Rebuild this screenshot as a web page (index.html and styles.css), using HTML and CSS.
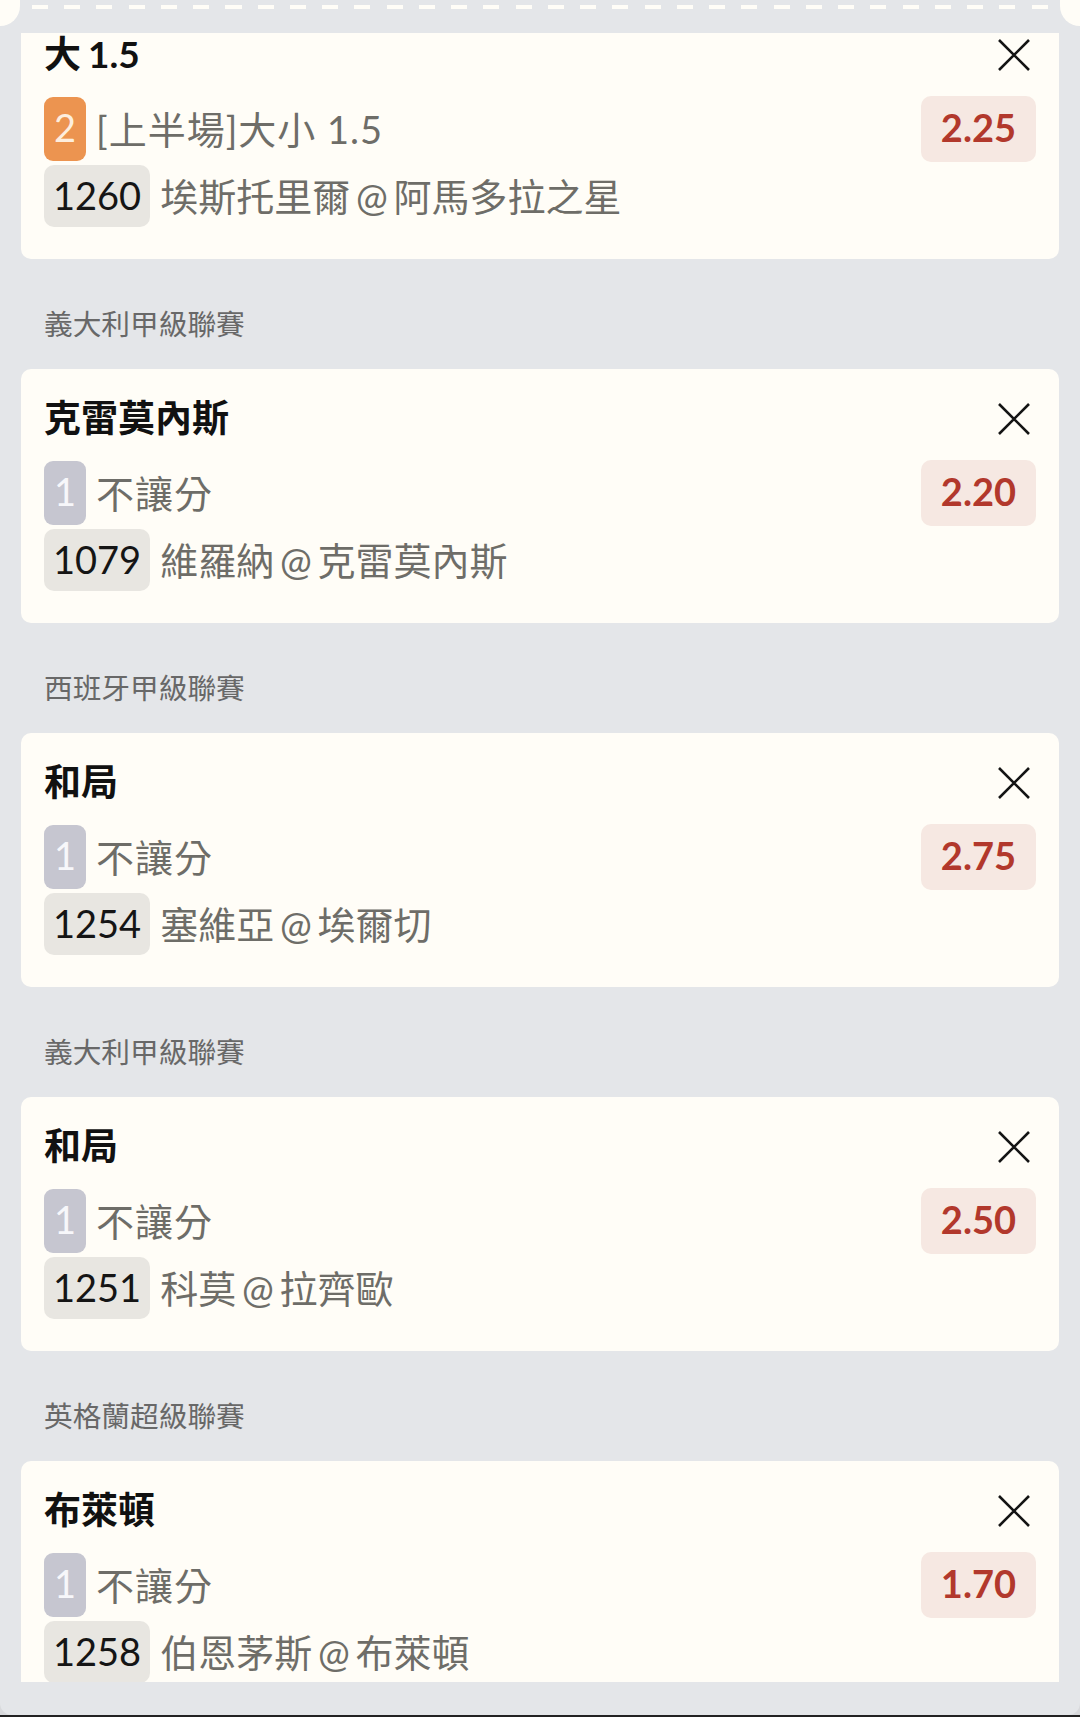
FILE: index.html
```html
<!DOCTYPE html>
<html lang="zh-Hant">
<head>
  <meta charset="UTF-8" />
  <meta name="viewport" content="width=device-width, initial-scale=1.0"/>
  <title>投注單</title>
  <link rel="stylesheet" href="styles.css">
</head>
<body>
  <div class="panel">
    <div class="tear">
      <div class="notch notch-left"></div>
      <div class="perf"></div>
      <div class="notch notch-right"></div>
    </div>

    <div class="slip">
      <div class="slip-list">

        <div class="card">
          <div class="card-head">
            <div class="pick">大 1.5</div>
            <button class="close"><svg viewBox="0 0 32 32"><path d="M1 1L31 31M31 1L1 31"/></svg></button>
          </div>
          <div class="market">
            <div class="market-left">
              <span class="leg leg-2">2</span>
              <span class="market-name">[上半場]大小 1.5</span>
            </div>
            <span class="odds">2.25</span>
          </div>
          <div class="match">
            <span class="code">1260</span>
            <span class="teams">埃斯托里爾 @ 阿馬多拉之星</span>
          </div>
        </div>

        <div class="league">義大利甲級聯賽</div>
        <div class="card">
          <div class="card-head">
            <div class="pick">克雷莫內斯</div>
            <button class="close"><svg viewBox="0 0 32 32"><path d="M1 1L31 31M31 1L1 31"/></svg></button>
          </div>
          <div class="market">
            <div class="market-left">
              <span class="leg leg-1">1</span>
              <span class="market-name">不讓分</span>
            </div>
            <span class="odds">2.20</span>
          </div>
          <div class="match">
            <span class="code">1079</span>
            <span class="teams">維羅納 @ 克雷莫內斯</span>
          </div>
        </div>

        <div class="league">西班牙甲級聯賽</div>
        <div class="card">
          <div class="card-head">
            <div class="pick">和局</div>
            <button class="close"><svg viewBox="0 0 32 32"><path d="M1 1L31 31M31 1L1 31"/></svg></button>
          </div>
          <div class="market">
            <div class="market-left">
              <span class="leg leg-1">1</span>
              <span class="market-name">不讓分</span>
            </div>
            <span class="odds">2.75</span>
          </div>
          <div class="match">
            <span class="code">1254</span>
            <span class="teams">塞維亞 @ 埃爾切</span>
          </div>
        </div>

        <div class="league">義大利甲級聯賽</div>
        <div class="card">
          <div class="card-head">
            <div class="pick">和局</div>
            <button class="close"><svg viewBox="0 0 32 32"><path d="M1 1L31 31M31 1L1 31"/></svg></button>
          </div>
          <div class="market">
            <div class="market-left">
              <span class="leg leg-1">1</span>
              <span class="market-name">不讓分</span>
            </div>
            <span class="odds">2.50</span>
          </div>
          <div class="match">
            <span class="code">1251</span>
            <span class="teams">科莫 @ 拉齊歐</span>
          </div>
        </div>

        <div class="league">英格蘭超級聯賽</div>
        <div class="card">
          <div class="card-head">
            <div class="pick">布萊頓</div>
            <button class="close"><svg viewBox="0 0 32 32"><path d="M1 1L31 31M31 1L1 31"/></svg></button>
          </div>
          <div class="market">
            <div class="market-left">
              <span class="leg leg-1">1</span>
              <span class="market-name">不讓分</span>
            </div>
            <span class="odds">1.70</span>
          </div>
          <div class="match">
            <span class="code">1258</span>
            <span class="teams">伯恩茅斯 @ 布萊頓</span>
          </div>
        </div>

      </div>
    </div>

    <div class="slip-foot"></div>
  </div>
  <div class="home-bar"></div>
</body>
</html>
```

FILE: styles.css
```css
* {
  box-sizing: border-box;
}

body {
  margin: 0;
  background-color: #d8d9dc;
  font-family: 'Lato', 'Noto Sans CJK TC', sans-serif;
}

.panel {
  height: 1715px;
  background-color: #e4e6e9;
  border-radius: 0 0 12px 12px;
  overflow: hidden;
  display: flex;
  flex-direction: column;
}

/* perforated edge at the top */
.tear {
  height: 33px;
  flex-shrink: 0;
  display: flex;
  align-items: flex-start;
}

.notch {
  width: 20px;
  height: 26px;
  background-color: #fffdf7;
}

.notch-left {
  border-bottom-right-radius: 20px;
}

.notch-right {
  border-bottom-left-radius: 20px;
}

.perf {
  flex: 1;
  height: 4px;
  margin: 5px 12px 0;
  background: repeating-linear-gradient(to right, #fffdf7 0 16px, transparent 16px 32.25px);
}

/* list is scrolled a little, first card slides under the top edge */
.slip {
  flex: 1;
  overflow: hidden;
  padding: 0 21px;
}

.slip-list {
  margin-top: -28px;
}

.card {
  background-color: #fffdf7;
  border-radius: 10px;
  padding: 22px 23px 32px;
}

.card-head {
  height: 56px;
  margin-bottom: 14px;
  display: flex;
  align-items: center;
  justify-content: space-between;
}

.pick {
  font-size: 37px;
  font-weight: bold;
  color: #111;
  word-spacing: -2px;
  padding-bottom: 6px;
}

.close {
  border: none;
  background: none;
  padding: 0;
  margin-right: 6px;
  width: 32px;
  height: 32px;
  cursor: pointer;
}

.close svg {
  display: block;
  width: 32px;
  height: 32px;
  fill: none;
  stroke: #141414;
  stroke-width: 2.6;
}

.market {
  height: 64px;
  display: flex;
  align-items: center;
  justify-content: space-between;
}

.market-left {
  display: flex;
  align-items: center;
  gap: 10px;
}

.leg {
  width: 42px;
  height: 64px;
  padding-bottom: 4px;
  border-radius: 9px;
  font-size: 38px;
  display: flex;
  align-items: center;
  justify-content: center;
}

.leg-1 {
  background-color: #c6c6d0;
  color: #f7f7fa;
}

.leg-2 {
  background-color: #ec9450;
  color: #fdeede;
}

.market-name,
.teams {
  font-size: 38px;
  color: #6e6d68;
  padding-bottom: 4px;
}

.market-name {
  letter-spacing: 1px;
}

.teams {
  word-spacing: -4px;
}

.odds {
  height: 66px;
  padding: 0 20px 4px;
  border-radius: 10px;
  background-color: #f6e8e2;
  color: #b2382c;
  font-size: 38px;
  font-weight: bold;
  display: flex;
  align-items: center;
}

.match {
  height: 62px;
  margin-top: 4px;
  display: flex;
  align-items: center;
  gap: 10px;
}

.code {
  height: 62px;
  padding: 0 9px 3px;
  border-radius: 10px;
  background-color: #e8e6e1;
  color: #151515;
  font-size: 38px;
  display: flex;
  align-items: center;
}

.league {
  padding: 45px 23px 25px;
  font-size: 28.7px;
  line-height: 40px;
  color: #686868;
}

.slip-foot {
  height: 33px;
  flex-shrink: 0;
}

.home-bar {
  height: 2px;
  background-color: #222;
}
```
